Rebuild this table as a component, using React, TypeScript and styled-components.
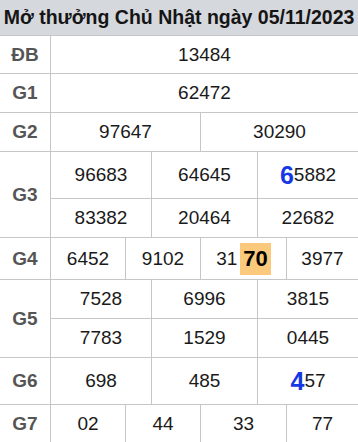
import React from "react";
import styled, { createGlobalStyle } from "styled-components";

const Global = createGlobalStyle`
  html, body { margin: 0; padding: 0; background: #fff; }
  body { font-family: "Liberation Sans", Arial, sans-serif; }
`;

const Table = styled.div`
  width: 358px;
  display: flex;
  flex-direction: column;
  font-family: "Liberation Sans", Arial, sans-serif;
`;

const Header = styled.div`
  height: 36px;
  background: #d5d8dd;
  display: flex;
  align-items: center;
  justify-content: center;
  font-weight: bold;
  font-size: 19.5px;
  color: #151515;
  white-space: nowrap;
  border-bottom: 1px solid #c6c6c6;
  box-sizing: border-box;
`;

const Group = styled.div`
  display: flex;
  border-bottom: 1px solid #c6c6c6;
`;

const Label = styled.div`
  width: 50px;
  flex: none;
  border-right: 1px solid #c6c6c6;
  display: flex;
  align-items: center;
  justify-content: center;
  font-weight: bold;
  font-size: 19px;
  color: #555;
`;

const Body = styled.div`
  flex: 1;
  display: flex;
  flex-direction: column;
`;

const SubRow = styled.div<{ $cols: string; $h: number; $last?: boolean }>`
  display: grid;
  grid-template-columns: ${(p) => p.$cols};
  height: ${(p) => p.$h}px;
  border-bottom: ${(p) => (p.$last ? "none" : "1px solid #c6c6c6")};
`;

const Cell = styled.div`
  display: flex;
  align-items: center;
  justify-content: center;
  font-size: 19px;
  color: #1a1a1a;
  border-right: 1px solid #c6c6c6;
  &:last-child { border-right: none; }
`;

const Big = styled.span`
  color: #1538e6;
  font-weight: bold;
  font-size: 25px;
`;

const Hot = styled.span`
  background: #fbc97b;
  font-weight: bold;
  font-size: 22px;
  padding: 3px 3px;
  margin-left: 3px;
  color: #000;
`;

const C1 = "1fr";
const C2 = "150px 1fr";
const C3 = "101px 106px 1fr";
const C4 = "75px 75px 86px 1fr";

type R = { cols: string; h: number; cells: React.ReactNode[] };

const groups: { label: string; rows: R[] }[] = [
  { label: "ĐB", rows: [{ cols: C1, h: 37, cells: ["13484"] }] },
  { label: "G1", rows: [{ cols: C1, h: 38, cells: ["62472"] }] },
  { label: "G2", rows: [{ cols: C2, h: 38, cells: ["97647", "30290"] }] },
  {
    label: "G3",
    rows: [
      { cols: C3, h: 46, cells: ["96683", "64645", <><Big>6</Big>5882</>] },
      { cols: C3, h: 38, cells: ["83382", "20464", "22682"] },
    ],
  },
  {
    label: "G4",
    rows: [{ cols: C4, h: 41, cells: ["6452", "9102", <>31<Hot>70</Hot></>, "3977"] }],
  },
  {
    label: "G5",
    rows: [
      { cols: C3, h: 38, cells: ["7528", "6996", "3815"] },
      { cols: C3, h: 38, cells: ["7783", "1529", "0445"] },
    ],
  },
  { label: "G6", rows: [{ cols: C3, h: 46, cells: ["698", "485", <><Big>4</Big>57</>] }] },
  { label: "G7", rows: [{ cols: C4, h: 38, cells: ["02", "44", "33", "77"] }] },
];

export default function App() {
  return (
    <>
      <Global />
      <Table>
        <Header>Mở thưởng Chủ Nhật ngày 05/11/2023</Header>
        {groups.map((g) => (
          <Group key={g.label}>
            <Label>{g.label}</Label>
            <Body>
              {g.rows.map((r, i) => (
                <SubRow key={i} $cols={r.cols} $h={r.h} $last={i === g.rows.length - 1}>
                  {r.cells.map((c, j) => (
                    <Cell key={j}>{c}</Cell>
                  ))}
                </SubRow>
              ))}
            </Body>
          </Group>
        ))}
      </Table>
    </>
  );
}
